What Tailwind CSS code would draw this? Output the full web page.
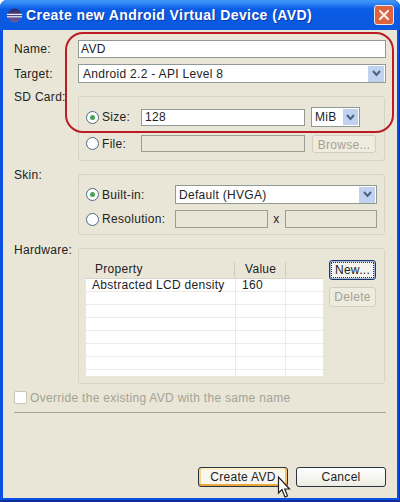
<!DOCTYPE html>
<html lang="en">
<head>
  <meta charset="UTF-8">
  <title>Create new Android Virtual Device (AVD)</title>
  <script src="https://cdn.jsdelivr.net/npm/@tailwindcss/browser@4"></script>
</head>
<body class="bg-white">
  <div class="relative w-[400px] h-[502px] overflow-hidden rounded-t-[7px] flex flex-col bg-[#0a4fdf] shadow-[inset_-1px_0_0_#0a2f9a,inset_0_-2px_0_#0a2f9a] font-['Liberation_Sans',sans-serif] text-[12px] text-[#222] tracking-[0.3px]">

    <!-- Title bar -->
    <div class="h-[30px] shrink-0 flex items-center pl-[7px] pr-[6px] bg-gradient-to-b from-[#3d93f7] from-[5%] via-[#0a5ce6] via-[30%] to-[#0b58e0]">
      <svg width="15" height="15" viewBox="0 0 15 15" class="shrink-0">
        <defs>
          <linearGradient id="sphere" x1="0" y1="0" x2="0" y2="1">
            <stop offset="0" stop-color="#2b2a66"/>
            <stop offset="1" stop-color="#6a5fa8"/>
          </linearGradient>
        </defs>
        <circle cx="7.5" cy="7.5" r="7" fill="url(#sphere)"/>
        <rect x="0" y="5.8" width="15" height="1.2" fill="#f2f0fa"/>
        <rect x="0" y="8.2" width="15" height="1.2" fill="#f2f0fa"/>
      </svg>
      <span class="ml-[4px] font-bold text-[14px] tracking-[0.42px] text-white [text-shadow:1px_1px_0_#0a3aa8]">Create new Android Virtual Device (AVD)</span>
      <div class="ml-auto w-[20px] h-[20px] rounded-[3px] border border-[#f0e8e4] bg-[#dc6240] flex items-center justify-center">
        <svg width="12" height="12" viewBox="0 0 12 12"><path d="M2 2 L10 10 M10 2 L2 10" stroke="#fbeee8" stroke-width="2.2" stroke-linecap="round"/></svg>
      </div>
    </div>

    <!-- Dialog body -->
    <div class="flex-1 mx-[3px] mb-[4px] bg-[#e9e6d7] pl-[11px] pr-[11px] flex flex-col">

      <div class="flex items-center mt-[10px]">
        <label class="w-[64px]">Name:</label>
        <input readonly value="AVD" class="w-[308px] h-[18px] bg-white border border-[#8f9a94] pl-[2px] outline-none">
      </div>

      <div class="flex items-center mt-[6px]">
        <label class="w-[64px]">Target:</label>
        <div class="w-[308px] h-[19px] bg-white border border-[#8f9a94] flex items-center pl-[4px] pr-[1px]">
          <span>Android 2.2 - API Level 8</span>
          <div class="ml-auto w-[16px] h-[16px] bg-[#c1d2ee] flex items-center justify-center">
            <svg width="9" height="7" viewBox="0 0 9 7"><path d="M1 1 L4.5 5 L8 1" fill="none" stroke="#4d6185" stroke-width="2"/></svg>
          </div>
        </div>
      </div>

      <div class="flex mt-[13px]">
        <label class="w-[64px] h-[14px] -mt-[8px]">SD Card:</label>
        <div class="w-[307px] h-[65px] border border-[#d6d3c4] rounded-[3px] pl-[7px] pt-[10px]">
          <div class="flex items-center h-[20px]">
            <div class="w-[55px] flex items-center gap-[3px]">
              <span class="w-[13px] h-[13px] rounded-full border border-[#4a6a84] bg-white flex items-center justify-center"><span class="w-[5px] h-[5px] rounded-full bg-[#4aa058]"></span></span>
              <span>Size:</span>
            </div>
            <input readonly value="128" class="w-[164px] h-[17px] bg-white border border-[#8f9a94] pl-[3px] outline-none">
            <div class="ml-[6px] w-[49px] h-[20px] bg-white border border-[#8f9a94] flex items-center pl-[3px] pr-[1px]">
              <span>MiB</span>
              <div class="ml-auto w-[15px] h-[16px] bg-[#c1d2ee] flex items-center justify-center">
                <svg width="9" height="7" viewBox="0 0 9 7"><path d="M1 1 L4.5 5 L8 1" fill="none" stroke="#4d6185" stroke-width="2"/></svg>
              </div>
            </div>
          </div>
          <div class="flex items-center h-[17px] mt-[8px]">
            <div class="w-[55px] flex items-center gap-[3px]">
              <span class="w-[13px] h-[13px] rounded-full border border-[#4a6a84] bg-white"></span>
              <span>File:</span>
            </div>
            <div class="w-[164px] h-[17px] bg-[#e9e6d7] border border-[#9a9d94]"></div>
            <button class="ml-[7px] w-[64px] h-[18px] border border-[#d2cfc0] rounded-[3px] bg-[#eeebdf] text-[#a5a294]">Browse...</button>
          </div>
        </div>
      </div>

      <div class="flex mt-[13px]">
        <label class="w-[64px] h-[14px] -mt-[8px]">Skin:</label>
        <div class="w-[307px] h-[61px] border border-[#d6d3c4] rounded-[3px] pl-[7px] pt-[10px]">
          <div class="flex items-center h-[19px]">
            <div class="w-[89px] flex items-center gap-[3px]">
              <span class="w-[13px] h-[13px] rounded-full border border-[#4a6a84] bg-white flex items-center justify-center"><span class="w-[5px] h-[5px] rounded-full bg-[#4aa058]"></span></span>
              <span>Built-in:</span>
            </div>
            <div class="w-[202px] h-[19px] bg-white border border-[#8f9a94] flex items-center pl-[3px] pr-[1px]">
              <span>Default (HVGA)</span>
              <div class="ml-auto w-[16px] h-[16px] bg-[#c1d2ee] flex items-center justify-center">
                <svg width="9" height="7" viewBox="0 0 9 7"><path d="M1 1 L4.5 5 L8 1" fill="none" stroke="#4d6185" stroke-width="2"/></svg>
              </div>
            </div>
          </div>
          <div class="flex items-center h-[18px] mt-[6px]">
            <div class="w-[89px] flex items-center gap-[3px]">
              <span class="w-[13px] h-[13px] rounded-full border border-[#4a6a84] bg-white"></span>
              <span>Resolution:</span>
            </div>
            <div class="w-[93px] h-[18px] bg-[#e9e6d7] border border-[#9a9d94]"></div>
            <span class="w-[17px] text-center">x</span>
            <div class="w-[92px] h-[18px] bg-[#e9e6d7] border border-[#9a9d94]"></div>
          </div>
        </div>
      </div>

      <div class="flex mt-[13px]">
        <label class="w-[64px] h-[14px] -mt-[7px]">Hardware:</label>
        <div class="w-[307px] h-[136px] border border-[#d6d3c4] rounded-[3px] pl-[7px] pt-[11px] flex">
          <div class="w-[237px]">
            <div class="h-[18px] flex items-center">
              <div class="w-[149px] h-[15px] pl-[9px] border-r border-[#cfccbd] leading-[15px]">Property</div>
              <div class="w-[51px] h-[15px] pl-[10px] border-r border-[#cfccbd] leading-[15px]">Value</div>
            </div>
            <div class="h-[98px] bg-white overflow-hidden border-t border-[#d8d5c8]">
              <div class="flex h-[13px] border-b border-[#ecebe4]">
                <div class="w-[150px] pl-[6px] border-r border-[#ecebe4] leading-[12px]">Abstracted LCD density</div>
                <div class="w-[50px] pl-[6px] border-r border-[#ecebe4] leading-[12px]">160</div>
              </div>
              <div class="flex h-[13px] border-b border-[#ecebe4]"><div class="w-[150px] border-r border-[#ecebe4]"></div><div class="w-[50px] border-r border-[#ecebe4]"></div></div>
              <div class="flex h-[13px] border-b border-[#ecebe4]"><div class="w-[150px] border-r border-[#ecebe4]"></div><div class="w-[50px] border-r border-[#ecebe4]"></div></div>
              <div class="flex h-[13px] border-b border-[#ecebe4]"><div class="w-[150px] border-r border-[#ecebe4]"></div><div class="w-[50px] border-r border-[#ecebe4]"></div></div>
              <div class="flex h-[13px] border-b border-[#ecebe4]"><div class="w-[150px] border-r border-[#ecebe4]"></div><div class="w-[50px] border-r border-[#ecebe4]"></div></div>
              <div class="flex h-[13px] border-b border-[#ecebe4]"><div class="w-[150px] border-r border-[#ecebe4]"></div><div class="w-[50px] border-r border-[#ecebe4]"></div></div>
              <div class="flex h-[13px] border-b border-[#ecebe4]"><div class="w-[150px] border-r border-[#ecebe4]"></div><div class="w-[50px] border-r border-[#ecebe4]"></div></div>
              <div class="flex h-[13px]"><div class="w-[150px] border-r border-[#ecebe4]"></div><div class="w-[50px] border-r border-[#ecebe4]"></div></div>
            </div>
          </div>
          <div class="ml-[6px] w-[47px] flex flex-col">
            <button class="h-[20px] border border-[#1f3a6a] rounded-[3px] bg-[#f5f4ee] p-[1px] shadow-[inset_0_0_0_1px_#9fb6dc]">
              <span class="block h-full leading-[14px] border border-dotted border-[#333]">New...</span>
            </button>
            <button class="h-[20px] mt-[7px] border border-[#d2cfc0] rounded-[3px] bg-[#eeebdf] text-[#a5a294]">Delete</button>
          </div>
        </div>
      </div>

      <div class="flex items-center mt-[7px] h-[13px]">
        <span class="w-[13px] h-[13px] border border-[#c8c5b6] rounded-[2px] bg-white"></span>
        <span class="ml-[3px] text-[#a5a294]">Override the existing AVD with the same name</span>
      </div>

      <div class="mt-[8px] h-px bg-[#a8a596]"></div>

      <div class="flex justify-end gap-[8px] mt-[54px]">
        <button class="w-[90px] h-[20px] border border-[#2a3340] rounded-[3px] bg-[#f8f6ee] shadow-[inset_0_-2px_0_#e8a93a,inset_2px_0_0_#f4d48a,inset_-2px_0_0_#f0c266,inset_0_2px_0_#fdf0c8]">Create AVD</button>
        <button class="w-[90px] h-[20px] border border-[#2a3340] rounded-[3px] bg-gradient-to-b from-white to-[#ecebe2]">Cancel</button>
      </div>
    </div>

    <!-- Red annotation drawn over the screenshot -->
    <div class="absolute left-[65px] top-[32px] w-[329px] h-[101px] rounded-[18px] border-2 border-[#bb1c24]"></div>

    <!-- Mouse pointer -->
    <svg class="absolute left-[277px] top-[476px]" width="14" height="23" viewBox="0 0 14 23">
      <path d="M1.5 1 L1.5 17 L5 13.5 L8 21 L10.5 20 L7.8 13 L12.5 13 Z" fill="#fff" stroke="#222" stroke-width="1.2" stroke-linejoin="miter"/>
    </svg>
  </div>
</body>
</html>
